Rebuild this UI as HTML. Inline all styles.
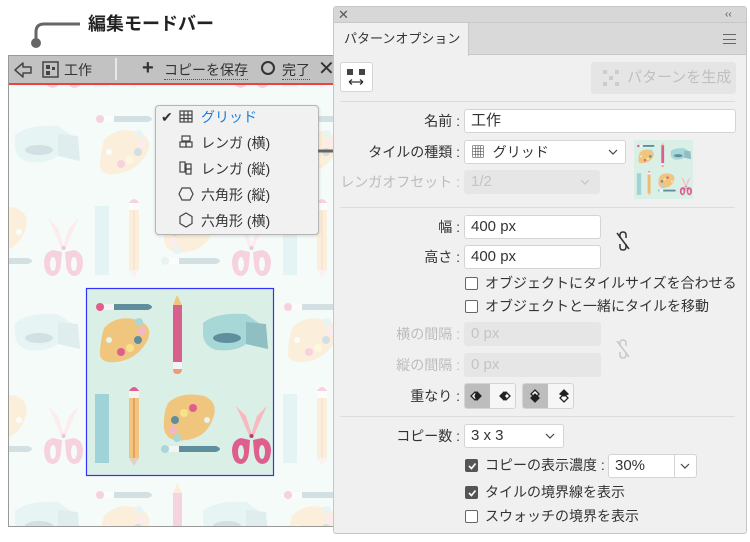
<!DOCTYPE html>
<html style="overflow:hidden"><head><meta charset="utf-8"><style>
*{margin:0;padding:0;box-sizing:border-box}
html,body{width:750px;height:542px;overflow:hidden}
body{background:#fff;position:relative;font-family:"Liberation Sans","Noto Sans CJK JP",sans-serif;color:#333;font-size:14px}
.a{position:absolute}
.lbl{position:absolute;text-align:right;white-space:nowrap;font-size:14px;line-height:24px}
.in{position:absolute;background:#fff;border:1px solid #d4d4d4;border-radius:3px;font-size:15px;line-height:22px;padding-left:6px;white-space:nowrap}
.dis{background:#e6e6e6;border-color:#e6e6e6;color:#c4c4c4}
.sep{position:absolute;left:340px;width:395px;height:1px;background:#dcdcdc}
.cb{position:absolute;width:13px;height:13px;border:1px solid #666;border-radius:2px;background:#fff}
.cb.on{background:#555;border-color:#555}
.ct{position:absolute;white-space:nowrap;font-size:14px;line-height:18px}
.mi{position:absolute;left:201px;font-size:14px;line-height:18px;white-space:nowrap}
</style></head><body>

<div class="a" style="left:88px;top:12px;font-size:18px;font-weight:bold;color:#222;line-height:24px">編集モードバー</div>
<svg class="a" style="left:0;top:0" width="100" height="60"><path d="M80 24 H44 Q36 24 36 32 V43" stroke="#666" stroke-width="3" fill="none"/><circle cx="36" cy="43" r="5" fill="#666"/></svg>

<div class="a" style="left:8px;top:55px;width:326px;height:472px;border:1px solid #999;background:#fff;overflow:hidden">
<svg width="326" height="472" style="position:absolute;left:0;top:0">
<defs>
<g id="t">
<rect width="188" height="188" fill="#daf0e6"/>
<circle cx="14" cy="19" r="4" fill="#de5f8e"/><rect x="18" y="16" width="10" height="6" fill="#f4f4f4"/><path d="M28 16 H62 Q70 19 62 22 H28Z" fill="#5f8f9f"/>
<path d="M18 40 Q32 25 55 33 Q70 42 58 58 Q48 72 30 74 Q12 76 14 62 Q15 50 18 40Z" fill="#f0c57e"/>
<circle cx="53" cy="34" r="4" fill="#a8d7d8"/><circle cx="56" cy="43" r="4" fill="#f2b8c8"/><circle cx="52" cy="52" r="4" fill="#5f8f9f"/><circle cx="44" cy="60" r="4" fill="#f6e28a"/><circle cx="35" cy="64" r="4" fill="#de5f8e"/><circle cx="23" cy="52" r="3" fill="#e6f4ee"/>
<path d="M87 17 L91 7 L96 17Z" fill="#f0c57e"/><rect x="87" y="17" width="9" height="57" fill="#d9608d"/><rect x="87" y="74" width="9" height="7" fill="#f4f4f4"/><path d="M87 81 H96 Q96 86 91 86 Q87 86 87 81Z" fill="#ef9a7a"/>
<path d="M117 35 Q130 24 160 26 L180 40 L182 61 L160 56 Q150 64 130 62 Q117 58 117 45Z" fill="#a8d7d8"/><path d="M160 34 L180 36 L182 61 L160 56Z" fill="#8fbfc3"/><ellipse cx="141" cy="50" rx="14" ry="5" fill="#5f8f9f"/>
<rect x="9" y="106" width="14" height="69" fill="#9fd3d8"/>
<path d="M43 103 Q48 95 53 103Z" fill="#de5f8e"/><rect x="43" y="103" width="10" height="7" fill="#f4f4f4"/><rect x="43" y="110" width="10" height="60" fill="#f0c57e"/><rect x="47" y="110" width="2" height="60" fill="#e6a060"/><path d="M43 170 L48 178 L53 170Z" fill="#e8d0c0"/>
<path d="M82 115 Q95 103 118 108 Q135 115 125 135 Q118 150 100 152 Q80 155 78 140 Q77 125 82 115Z" fill="#f0c57e"/>
<circle cx="107" cy="120" r="4" fill="#de5f8e"/><circle cx="98" cy="125" r="4" fill="#f6e28a"/><circle cx="89" cy="132" r="4" fill="#5f8f9f"/><circle cx="87" cy="142" r="4" fill="#f2b8c8"/><circle cx="91" cy="150" r="4" fill="#a8d7d8"/><circle cx="121" cy="132" r="3" fill="#e6f4ee"/>
<circle cx="79" cy="161" r="4" fill="#a8d7d8"/><rect x="83" y="158" width="10" height="6" fill="#f4f4f4"/><path d="M93 158 H130 Q138 161 130 164 H93Z" fill="#5f8f9f"/>
<path d="M150 118 Q158 135 164 150 L167 150 L160 128Z M181 118 Q173 135 167 150 L164 150 L171 128Z" fill="#f9b8bf"/><path d="M155 150 Q146 152 146 163 Q147 176 155 176 Q162 175 163 164 L164 152Z M176 150 Q185 152 185 163 Q184 176 176 176 Q169 175 168 164 L167 152Z" fill="#de5f8e"/><ellipse cx="155" cy="164" rx="3" ry="7" fill="#daf0e6"/><ellipse cx="176" cy="164" rx="3" ry="7" fill="#daf0e6"/><circle cx="165.5" cy="148" r="2" fill="#b04070"/>
</g>
</defs>
<g opacity="0.28">
<use href="#t" x="-111" y="44"/><use href="#t" x="77" y="44"/><use href="#t" x="265" y="44"/>
<use href="#t" x="-111" y="-144"/><use href="#t" x="77" y="-144"/><use href="#t" x="265" y="-144"/>
<use href="#t" x="-111" y="232"/><use href="#t" x="265" y="232"/>
<use href="#t" x="-111" y="420"/><use href="#t" x="77" y="420"/><use href="#t" x="265" y="420"/>
</g>
<use href="#t" x="77" y="232"/>
<rect x="77.5" y="232.5" width="187" height="187" fill="none" stroke="#3333ff" stroke-width="1.2"/>
</svg>
</div>
<div class="a" style="left:9px;top:56px;width:325px;height:27px;background:#c2c2c2"></div>
<div class="a" style="left:9px;top:83px;width:325px;height:2px;background:#f04040"></div>
<svg class="a" style="left:12px;top:60px" width="22" height="20"><path d="M3 10 L11 3 V7 H19 V13 H11 V17Z" fill="none" stroke="#444" stroke-width="1.5" stroke-linejoin="round"/></svg>
<svg class="a" style="left:42px;top:61px" width="18" height="18"><rect x="1" y="1" width="15" height="15" fill="none" stroke="#444" stroke-width="1.5"/><rect x="4" y="4" width="4" height="4" fill="#444"/><rect x="10" y="6" width="3" height="3" fill="#444"/><rect x="4" y="10" width="4" height="4" fill="#444"/></svg>
<div class="a" style="left:64px;top:61px;font-size:14px;color:#333;line-height:18px">工作</div>
<div class="a" style="left:115px;top:58px;width:2px;height:22px;background:#e8e8e8"></div>
<div class="a" style="left:142px;top:56px;font-size:20px;font-weight:bold;color:#333;line-height:24px">+</div>
<div class="a" style="left:164px;top:61px;font-size:14px;color:#333;line-height:18px;border-bottom:1px dotted #555">コピーを保存</div>
<div class="a" style="left:261px;top:61px;width:14px;height:14px;border:2.5px solid #333;border-radius:50%"></div>
<div class="a" style="left:282px;top:61px;font-size:14px;color:#333;line-height:18px;border-bottom:1px dotted #555">完了</div>
<div class="a" style="left:318px;top:57px;font-size:20px;color:#333;line-height:24px">✕</div>

<div class="a" style="left:155px;top:105px;width:164px;height:130px;background:#f1f1f1;border:1px solid #b5b5b5;border-radius:4px;box-shadow:0 1px 3px rgba(0,0,0,.15)"></div>
<div class="a" style="left:161px;top:108px;font-size:14px;line-height:18px">✔</div>
<svg class="a" style="left:179px;top:110px" width="14" height="13"><g fill="none" stroke="#444" stroke-width="1.2"><rect x="1" y="1" width="12" height="11"/><path d="M5 1V12M9 1V12M1 5H13M1 8.5H13"/></g></svg>
<div class="mi" style="top:108px;color:#1a7ed8">グリッド</div>
<svg class="a" style="left:179px;top:135px" width="14" height="14"><g fill="none" stroke="#444" stroke-width="1.2"><rect x="3" y="1" width="8" height="5"/><rect x="1" y="7" width="6" height="5"/><rect x="7" y="7" width="6" height="5"/></g></svg>
<div class="mi" style="top:134px">レンガ (横)</div>
<svg class="a" style="left:179px;top:161px" width="14" height="14"><g fill="none" stroke="#444" stroke-width="1.2"><rect x="1" y="1" width="5" height="10"/><rect x="7" y="3" width="5" height="5"/><rect x="7" y="8" width="5" height="5"/></g></svg>
<div class="mi" style="top:160px">レンガ (縦)</div>
<svg class="a" style="left:178px;top:187px" width="16" height="14"><path d="M4 1H12L15 7L12 13H4L1 7Z" fill="none" stroke="#444" stroke-width="1.2"/></svg>
<div class="mi" style="top:186px">六角形 (縦)</div>
<svg class="a" style="left:179px;top:212px" width="14" height="16"><path d="M7 1L13 4.5V11.5L7 15L1 11.5V4.5Z" fill="none" stroke="#444" stroke-width="1.2"/></svg>
<div class="mi" style="top:212px">六角形 (横)</div>
<svg class="a" style="left:318px;top:144px" width="50" height="14"><path d="M0 7H40" stroke="#666" stroke-width="3"/><circle cx="40" cy="7" r="5" fill="#666"/></svg>

<div class="a" style="left:333px;top:6px;width:414px;height:528px;background:#f0f0f0;border:1px solid #c6c6c6;border-radius:3px"></div>
<div class="a" style="left:334px;top:7px;width:412px;height:16px;background:#d7d7d7;border-bottom:1px solid #c8c8c8"></div>
<div class="a" style="left:338px;top:7px;font-size:13px;color:#555;line-height:16px">✕</div>
<div class="a" style="left:725px;top:7px;font-size:10px;color:#555;line-height:16px">‹‹</div>
<div class="a" style="left:334px;top:23px;width:412px;height:32px;background:#d9d9d9;border-bottom:1px solid #c8c8c8"></div>
<div class="a" style="left:334px;top:23px;width:135px;height:33px;background:#f0f0f0;border-right:1px solid #c8c8c8"></div>
<div class="a" style="left:344px;top:30px;font-size:13px;color:#333;line-height:18px">パターンオプション</div>
<div class="a" style="left:723px;top:34px;width:13px;height:10px;border-top:1.5px solid #666;border-bottom:1.5px solid #666"></div>
<div class="a" style="left:723px;top:38.5px;width:13px;height:1.5px;background:#666"></div>

<div class="a" style="left:340px;top:62px;width:33px;height:30px;background:#fff;border:1px solid #d4d4d4;border-radius:3px"></div>
<svg class="a" style="left:345px;top:68px" width="24" height="20"><g fill="#444"><rect x="2" y="1" width="6" height="6"/><rect x="14" y="1" width="6" height="6"/></g><path d="M4 14H18M4 14L7 11.5M4 14L7 16.5M18 14L15 11.5M18 14L15 16.5" stroke="#333" stroke-width="1.3" fill="none"/></svg>
<div class="a" style="left:591px;top:62px;width:145px;height:32px;background:#e5e5e5;border-radius:3px"></div>
<svg class="a" style="left:603px;top:70px" width="18" height="18"><g fill="#ccc"><rect x="0" y="0" width="4" height="4"/><rect x="12" y="0" width="4" height="4"/><rect x="6" y="6" width="4" height="4"/><rect x="0" y="12" width="4" height="4"/><rect x="12" y="12" width="4" height="4"/></g></svg>
<div class="a" style="left:627px;top:68px;font-size:15px;color:#c0c0c0;line-height:20px">パターンを生成</div>
<div class="sep" style="top:101px"></div>

<div class="lbl" style="right:290px;top:109px">名前 :</div>
<div class="in" style="left:464px;top:109px;width:272px;height:24px">工作</div>
<div class="lbl" style="right:290px;top:140px">タイルの種類 :</div>
<div class="in" style="left:464px;top:140px;width:162px;height:24px"><span style="font-size:14px">▦&nbsp; グリッド</span></div>
<svg class="a" style="left:608px;top:148px" width="10" height="8"><path d="M1 2L5 6L9 2" stroke="#444" stroke-width="1.2" fill="none"/></svg>
<div class="lbl" style="right:290px;top:170px;color:#bcbcbc">レンガオフセット :</div>
<div class="in dis" style="left:464px;top:170px;width:136px;height:24px">1/2</div>
<svg class="a" style="left:580px;top:178px" width="10" height="8"><path d="M1 2L5 6L9 2" stroke="#c4c4c4" stroke-width="1.2" fill="none"/></svg>
<svg class="a" style="left:634px;top:140px" width="59" height="59" viewBox="0 0 188 188"><use href="#t"/></svg>
<div class="sep" style="top:207px"></div>

<div class="lbl" style="right:290px;top:215px">幅 :</div>
<div class="in" style="left:464px;top:215px;width:137px;height:24px">400 px</div>
<div class="lbl" style="right:290px;top:245px">高さ :</div>
<div class="in" style="left:464px;top:245px;width:137px;height:24px">400 px</div>
<svg class="a" style="left:614px;top:230px" width="18" height="22"><g fill="none" stroke="#333" stroke-width="1.5"><path d="M6 8 V5 Q6 2 9 2 Q12 2 12 5 V8"/><path d="M6 14 V17 Q6 20 9 20 Q12 20 12 17 V14"/><path d="M3 3 L15 19"/></g></svg>

<div class="cb" style="left:465px;top:277px"></div><div class="ct" style="left:485px;top:274px">オブジェクトにタイルサイズを合わせる</div>
<div class="cb" style="left:465px;top:300px"></div><div class="ct" style="left:485px;top:297px">オブジェクトと一緒にタイルを移動</div>

<div class="lbl" style="right:290px;top:322px;color:#bcbcbc">横の間隔 :</div>
<div class="in dis" style="left:464px;top:322px;width:137px;height:24px">0 px</div>
<div class="lbl" style="right:290px;top:353px;color:#bcbcbc">縦の間隔 :</div>
<div class="in dis" style="left:464px;top:353px;width:137px;height:24px">0 px</div>
<svg class="a" style="left:614px;top:338px" width="18" height="22"><g fill="none" stroke="#c8c8c8" stroke-width="1.5"><path d="M6 8 V5 Q6 2 9 2 Q12 2 12 5 V8"/><path d="M6 14 V17 Q6 20 9 20 Q12 20 12 17 V14"/><path d="M3 3 L15 19"/></g></svg>

<div class="lbl" style="right:290px;top:384px">重なり :</div>
<div class="a" style="left:464px;top:383px;width:52px;height:26px;border:1px solid #d4d4d4;border-radius:3px;background:#f6f6f6;overflow:hidden"><div style="width:25px;height:26px;background:#bdbdbd"></div></div>
<div class="a" style="left:522px;top:383px;width:52px;height:26px;border:1px solid #d4d4d4;border-radius:3px;background:#f6f6f6;overflow:hidden"><div style="width:25px;height:26px;background:#bdbdbd"></div></div>
<svg class="a" style="left:464px;top:383px" width="112" height="26"><g stroke="#222" stroke-width="1.3"><path d="M7 13L11 9L15 13L11 17Z" fill="#fff"/><path d="M13 9L17 13L13 17L11 13Z" fill="#222"/><path d="M42 9L46 13L42 17L38 13Z" fill="#fff"/><path d="M36 13L40 9L42 11L40 13L42 15L40 17Z" fill="#222"/>
<path d="M71 7L75 11L71 15L67 11Z" fill="#fff"/><path d="M67 15L71 11L75 15L71 19Z" fill="#222"/><path d="M100 11L104 15L100 19L96 15Z" fill="#fff"/><path d="M96 11L100 7L104 11L100 13Z" fill="#222"/></g></svg>
<div class="sep" style="top:416px"></div>

<div class="lbl" style="right:290px;top:424px">コピー数 :</div>
<div class="in" style="left:464px;top:424px;width:100px;height:24px">3 x 3</div>
<svg class="a" style="left:545px;top:432px" width="10" height="8"><path d="M1 2L5 6L9 2" stroke="#444" stroke-width="1.2" fill="none"/></svg>
<div class="cb on" style="left:465px;top:459px"></div><svg class="a" style="left:467px;top:461px" width="10" height="10"><path d="M2 5L4.5 7.5L8.5 2.5" stroke="#fff" stroke-width="1.6" fill="none"/></svg>
<div class="ct" style="left:485px;top:456px">コピーの表示濃度 :</div>
<div class="in" style="left:608px;top:454px;width:89px;height:24px">30%</div>
<div class="a" style="left:674px;top:455px;width:1px;height:22px;background:#d4d4d4"></div>
<svg class="a" style="left:680px;top:462px" width="10" height="8"><path d="M1 2L5 6L9 2" stroke="#444" stroke-width="1.2" fill="none"/></svg>
<div class="cb on" style="left:465px;top:486px"></div><svg class="a" style="left:467px;top:488px" width="10" height="10"><path d="M2 5L4.5 7.5L8.5 2.5" stroke="#fff" stroke-width="1.6" fill="none"/></svg>
<div class="ct" style="left:485px;top:483px">タイルの境界線を表示</div>
<div class="cb" style="left:465px;top:510px"></div><div class="ct" style="left:485px;top:507px">スウォッチの境界を表示</div>
</body></html>
